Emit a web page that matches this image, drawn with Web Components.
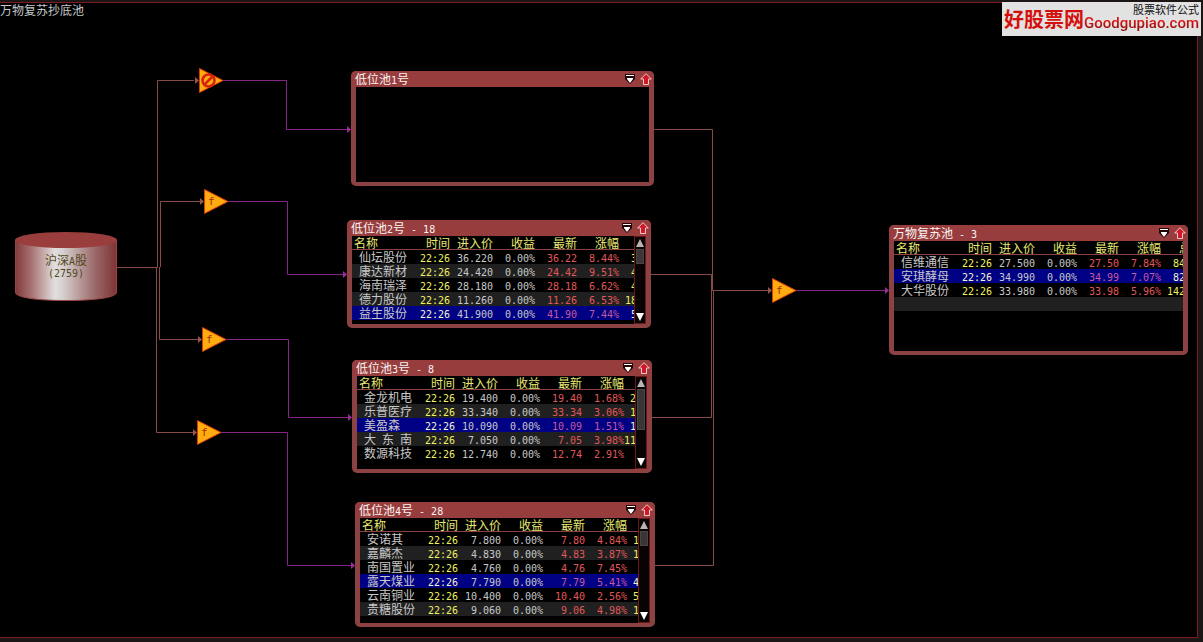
<!DOCTYPE html>
<html lang="zh-CN">
<head>
<meta charset="utf-8">
<title>万物复苏抄底池</title>
<style>
  html, body { height: 100%; margin: 0; background: #1b1615; }
  body { font: 12px/14px "Noto Sans CJK SC", sans-serif; color: #c0c0c0; overflow: hidden; }
</style>
</head>
<body>
<pool-board heading="万物复苏抄底池">
  <flow-wires></flow-wires>
  <stock-source style="left:15px;top:232px" name="沪深A股" count="2759"></stock-source>

  <flow-filter style="left:198px;top:67px" blocked></flow-filter>
  <flow-filter style="left:203px;top:188px"></flow-filter>
  <flow-filter style="left:201px;top:326px"></flow-filter>
  <flow-filter style="left:196px;top:419px"></flow-filter>
  <flow-filter style="left:771px;top:277px"></flow-filter>

  <stock-pool style="left:351px;top:71px;width:303px;height:115px" heading="低位池1号"></stock-pool>

  <stock-pool style="left:347px;top:220px;width:304px;height:108px;--thumb:15px" heading="低位池2号 - 18" scroll selected="5">
仙坛股份|22:26|36.220|0.00%|36.22|8.44%|  3
康达新材|22:26|24.420|0.00%|24.42|9.51%|  4
海南瑞泽|22:26|28.180|0.00%|28.18|6.62%|  4
德力股份|22:26|11.260|0.00%|11.26|6.53%| 18
益生股份|22:26|41.900|0.00%|41.90|7.44%|  5
  </stock-pool>

  <stock-pool style="left:352px;top:360px;width:300px;height:113px;--thumb:41px" heading="低位池3号 - 8" scroll selected="3">
金龙机电|22:26|19.400|0.00%|19.40|1.68%| 2
乐普医疗|22:26|33.340|0.00%|33.34|3.06%| 1
美盈森|22:26|10.090|0.00%|10.09|1.51%| 1
大 东 南|22:26|7.050|0.00%|7.05|3.98%|11
数源科技|22:26|12.740|0.00%|12.74|2.91%|
  </stock-pool>

  <stock-pool style="left:355px;top:502px;width:300px;height:125px;--thumb:15px" heading="低位池4号 - 28" scroll selected="4">
安诺其|22:26|7.800|0.00%|7.80|4.84%| 1
嘉麟杰|22:26|4.830|0.00%|4.83|3.87%| 1
南国置业|22:26|4.760|0.00%|4.76|7.45%|
露天煤业|22:26|7.790|0.00%|7.79|5.41%| 4
云南铜业|22:26|10.400|0.00%|10.40|2.56%| 5
贵糖股份|22:26|9.060|0.00%|9.06|4.98%| 1
  </stock-pool>

  <stock-pool style="left:889px;top:225px;width:299px;height:130px" heading="万物复苏池 - 3" selected="2" more="总">
信维通信|22:26|27.500|0.00%|27.50|7.84%|  84
安琪酵母|22:26|34.990|0.00%|34.99|7.07%|  82
大华股份|22:26|33.980|0.00%|33.98|5.96%| 142
||||||
  </stock-pool>

  <site-mark slot="mark"></site-mark>
</pool-board>

<script>
const NUM = '"DejaVu Sans Mono", monospace';

/* Wraps runs of ASCII so that they take the half-width face. */
function mixed(text) {
  return text.replace(/[\x20-\x7e]+/g, run => `<span class="n">${run}</span>`);
}

class PoolBoard extends HTMLElement {
  connectedCallback() {
    this.attachShadow({ mode: 'open' }).innerHTML = `
      <style>
        :host { display: block; height: 100%; box-sizing: border-box; padding: 2px 5px 4px 0; position: relative; }
        main { height: 100%; box-sizing: border-box; background: #000;
               border: solid #7c1c20; border-width: 1px 1px 1px 0; }
        h1 { margin: 0; font: inherit; color: #c4c8c8; }
      </style>
      <main><h1>${this.getAttribute('heading')}</h1><slot></slot></main>
      <slot name="mark"></slot>`;
  }
}

class FlowWires extends HTMLElement {
  connectedCallback() {
    const brown = ['M117 267.5H157.5V80.5H194', 'M160.5 267V201.5H200', 'M159.5 267V339.5H198', 'M156.5 267V432.5H193',
                   'M654 129.5H712.5V290.5H768', 'M651 274.5H711.5V290', 'M652 417.5H711.5V290', 'M655 565.5H713.5V290'];
    const violet = ['M222 80.5H286.5V129.5H348', 'M228 201.5H287.5V274.5H344', 'M226 339.5H288.5V417.5H349',
                    'M221 432.5H287.5V565.5H352', 'M796 290.5H886'];
    const heads = list => list.map(([x, y]) => `<path d="M${x} ${y - 3}l4 3.5-4 3.5z"/>`).join('');
    this.attachShadow({ mode: 'open' }).innerHTML = `
      <style>
        :host { position: absolute; inset: 0; }
        svg { display: block; width: 100%; height: 100%; }
      </style>
      <svg aria-hidden="true">
        <path d="${brown.join('')}" fill="none" stroke="#874c47"/>
        <path d="${violet.join('')}" fill="none" stroke="#842684"/>
        <g fill="#955550">${heads([[195, 80], [200, 201], [198, 339], [193, 432], [768, 290]])}</g>
        <g fill="#9c2c9c">${heads([[347, 129], [343, 274], [348, 417], [351, 565], [885, 290]])}</g>
      </svg>`;
  }
}

class StockSource extends HTMLElement {
  connectedCallback() {
    this.attachShadow({ mode: 'open' }).innerHTML = `
      <style>
        :host { position: absolute; display: grid; width: 102px; height: 69px; color: #504a1c; }
        svg, div { grid-area: 1 / 1; }
        div { padding-top: 22px; line-height: 12px; text-align: center; z-index: 1; }
        .n { font: 10px/8px ${NUM}; }
      </style>
      <svg width="102" height="69" aria-hidden="true">
        <defs><linearGradient id="g">
          <stop offset="0" stop-color="#833b3b"/><stop offset=".15" stop-color="#a56e6e"/>
          <stop offset=".39" stop-color="#e2dfdf"/><stop offset=".46" stop-color="#d8d2d2"/>
          <stop offset=".8" stop-color="#996565"/><stop offset="1" stop-color="#803333"/>
        </linearGradient></defs>
        <path d="M.5 8V61C3 66 24 68.500 51 68.500S99 66 101.500 61V8z" fill="url(#g)" stroke="#944"/>
        <ellipse cx="51" cy="8" rx="51" ry="8" fill="#993d3d"/>
      </svg>
      <div>${mixed(this.getAttribute('name'))}<br><span class="n">(${this.getAttribute('count')})</span></div>`;
  }
}

class FlowFilter extends HTMLElement {
  connectedCallback() {
    const face = this.hasAttribute('blocked')
      ? '<g fill="none" stroke="#d8200c" stroke-width="2.500"><circle cx="10.500" cy="13.500" r="6"/><path d="M7 17l7-7"/></g>'
      : '<text x="5" y="17">f</text>';
    this.attachShadow({ mode: 'open' }).innerHTML = `
      <style>
        :host { position: absolute; }
        svg { display: block; }
        text { font: 11px ${NUM}; fill: #a03000; }
      </style>
      <svg width="27" height="27">
        <path d="M1.500 1.500L25 13.500 1.500 25.500z" fill="#ffac10" stroke="#d83a08"/>${face}
      </svg>`;
  }
}

class PoolScroll extends HTMLElement {
  connectedCallback() {
    this.attachShadow({ mode: 'open' }).innerHTML = `
      <style>
        :host { display: flex; flex-direction: column; width: 12px; box-sizing: border-box;
                background: #080404; border: 1px solid #701818; }
        button { height: 12px; padding: 0; border: 0; background: none; display: grid; place-items: center; }
        .track { flex: 1; }
        .thumb { height: var(--thumb, 15px); width: 8px; margin: 0 auto; background: #383636;
                 box-sizing: border-box; border: 1px solid #4c4444; }
      </style>
      <button aria-label="向上"><svg width="8" height="8"><path d="M4 0L8 8H0z" fill="#b8b4b4"/></svg></button>
      <div class="track"><div class="thumb"></div></div>
      <button aria-label="向下"><svg width="8" height="8"><path d="M4 8L8 0H0z" fill="#fff"/></svg></button>`;
  }
}

class StockPool extends HTMLElement {
  connectedCallback() {
    const rows = this.textContent.split('\n').filter(l => l.includes('|')).map(l => l.split('|'));
    const selected = Number(this.getAttribute('selected'));
    const heads = ['名称', '时间', '进入价', '收益', '最新', '涨幅', this.getAttribute('more') || ''];
    const table = rows.length ? `
      <table>
        <colgroup><col style="width:56px"><col style="width:42px"><col style="width:43px"><col style="width:42px">
          <col style="width:42px"><col style="width:42px"><col style="width:60px"></colgroup>
        <thead><tr>${heads.map(h => `<th scope="col">${h}</th>`).join('')}</tr></thead>
        <tbody>${rows.map((r, i) => `<tr${i + 1 === selected ? ' class="on"' : ''}>${
          r.map(c => `<td>${mixed(c)}</td>`).join('')}</tr>`).join('')}</tbody>
      </table>` : '';
    this.attachShadow({ mode: 'open' }).innerHTML = `
      <style>
        :host { position: absolute; display: flex; flex-direction: column; box-sizing: border-box;
                padding: 0 5px 4px; border-radius: 5px; background: #8c4242; color: #c8c8c8; }
        header { display: flex; align-items: center; height: 16px; margin: 0 -5px; padding: 0 2px 0 4px;
                 border-radius: 5px 5px 0 0; background: #983d3d; color: #f8f4f4; }
        h2 { flex: 1; margin: 0; font: inherit; white-space: pre; }
        header button { display: grid; padding: 0; border: 0; background: none; margin-left: 5px; }
        .body { flex: 1; min-height: 0; display: flex; background: #000; overflow: hidden; }
        .clip { flex: 1; min-width: 0; overflow: hidden; }
        .n { font: 10px/8px ${NUM}; }
        table { table-layout: fixed; width: 327px; border-collapse: separate; border-spacing: 0; }
        tr { height: 14px; }
        th, td { padding: 0; height: 14px; line-height: 14px; text-align: right; white-space: pre; font-weight: 400; }
        th { height: 13px; line-height: 13px; color: #e8e870; border-bottom: 1px solid #8c4242; }
        th:first-child { text-align: left; padding-left: 2px; }
        td:first-child { text-align: left; padding-left: 7px; }
        td:nth-child(2) { color: #f0f060; }
        td:nth-child(5), td:nth-child(6) { color: #e05858; }
        td:last-child { text-align: left; color: #f0f060; }
        th:last-child { text-align: left; padding-left: 18px; }
        tbody tr:nth-child(even) { background: #202020; }
        tbody tr.on { background: #000084; }
        tr.on td:nth-child(2), tr.on td:last-child { color: #f4f4d0; }
        tr.on td:nth-child(5), tr.on td:nth-child(6) { color: #c8589c; }
      </style>
      <header>
        <h2>${mixed(this.getAttribute('heading'))}</h2>
        <button aria-label="菜单"><svg width="10" height="10">
          <path d="M0 0H10V5L5 10 0 5z" fill="#200808"/><path d="M1 1.500H9M2 4.500H8" stroke="#fff"/><path d="M2 5H8L5 9z" fill="#fff"/>
        </svg></button>
        <button aria-label="置顶"><svg width="12" height="12">
          <path d="M6 .7L11.300 6H8.500V11.500H3.500V6H.7z" fill="#d01828" stroke="#f4c8c8"/>
        </svg></button>
      </header>
      <div class="body"><div class="clip">${table}</div>${this.hasAttribute('scroll') ? '<pool-scroll></pool-scroll>' : ''}</div>`;
  }
}

class SiteMark extends HTMLElement {
  connectedCallback() {
    this.attachShadow({ mode: 'open' }).innerHTML = `
      <style>
        :host { position: absolute; top: 2px; right: 2px; display: flex; align-items: center;
                box-sizing: border-box; height: 34px; padding: 0 2px; background: #e2e2e2; white-space: nowrap; }
        .zh { font: 700 20px/34px "Noto Sans CJK SC", sans-serif; color: #d4100c; }
        .side { display: flex; flex-direction: column; }
        .top { font: 11px/12px "Noto Sans CJK SC", sans-serif; color: #101010; align-self: flex-end; }
        .en { font: 500 15px/16px Roboto, sans-serif; color: transparent; padding-bottom: 4px;
              background: linear-gradient(#d81410 30%, #5c0808); background-clip: text; -webkit-background-clip: text; }
      </style>
      <span class="zh">好股票网</span>
      <span class="side"><span class="top">股票软件公式</span><span class="en">Goodgupiao.com</span></span>`;
  }
}

customElements.define('pool-board', PoolBoard);
customElements.define('flow-wires', FlowWires);
customElements.define('stock-source', StockSource);
customElements.define('flow-filter', FlowFilter);
customElements.define('pool-scroll', PoolScroll);
customElements.define('stock-pool', StockPool);
customElements.define('site-mark', SiteMark);
</script>
</body>
</html>
